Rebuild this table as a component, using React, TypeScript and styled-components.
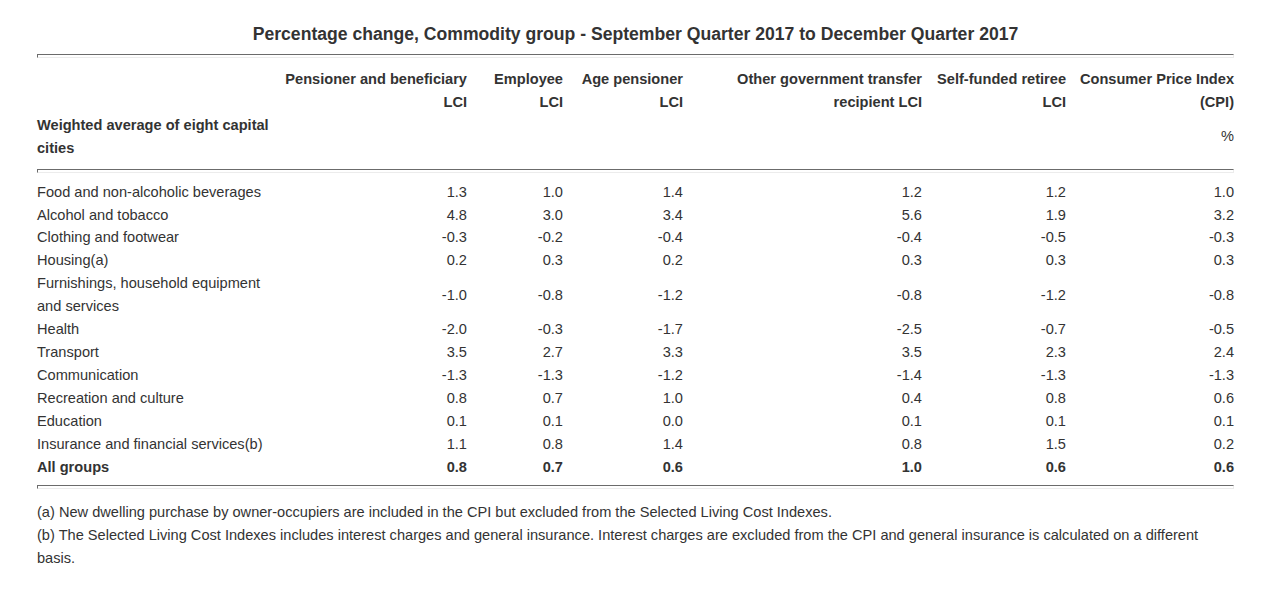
import React from "react";
import styled, { createGlobalStyle } from "styled-components";

const GlobalStyle = createGlobalStyle`
  body {
    margin: 0;
    background: #ffffff;
    font-family: "Liberation Sans", Arial, sans-serif;
    color: #333333;
  }
`;

const Page = styled.div`
  width: 1197px;
  padding: 22px 0 0 37px;
`;

const Title = styled.h2`
  margin: 0 0 8px;
  font-size: 17.6px;
  line-height: 24px;
  font-weight: bold;
  text-align: center;
`;

const Rule = styled.hr`
  margin: 0;
  height: 2px;
  border-width: 1px;
  border-style: solid;
  border-color: #6b6b6b #ececec #ececec #6b6b6b;
`;

const Table = styled.table`
  width: 1197px;
  border-collapse: collapse;
  table-layout: fixed;
  font-size: 14.6px;
  line-height: 22.9px;
`;

const RuleCell = styled.td<{ $top: number; $bottom: number }>`
  padding: ${(p) => p.$top}px 0 ${(p) => p.$bottom}px;
`;

const HeadCell = styled.th<{ $first?: boolean }>`
  padding: 0 ${(p) => (p.$first ? "4px" : "0")} 0 ${(p) => (p.$first ? "0" : "2px")};
  text-align: ${(p) => (p.$first ? "left" : "right")};
  vertical-align: ${(p) => (p.$first ? "top" : "middle")};
  font-weight: bold;
`;

const UnitCell = styled.td`
  padding: 0 0 0 2px;
  text-align: right;
  vertical-align: middle;
`;

const LabelCell = styled.td<{ $bold?: boolean }>`
  padding: 0 4px 0 0;
  text-align: left;
  font-weight: ${(p) => (p.$bold ? "bold" : "normal")};
`;

const ValueCell = styled.td<{ $bold?: boolean }>`
  padding: 0 0 0 2px;
  text-align: right;
  vertical-align: middle;
  font-weight: ${(p) => (p.$bold ? "bold" : "normal")};
`;

const Notes = styled.div`
  padding-top: 12px;
  font-size: 14.6px;
  line-height: 23px;
`;

const Note = styled.p`
  margin: 0;
`;

const widths = [241, 189, 96, 120, 239, 144, 168];

const headers = [
  "Pensioner and beneficiary LCI",
  "Employee LCI",
  "Age pensioner LCI",
  "Other government transfer recipient LCI",
  "Self-funded retiree LCI",
  "Consumer Price Index (CPI)",
];

const rows: { label: string; values: string[]; total?: boolean }[] = [
  { label: "Food and non-alcoholic beverages", values: ["1.3", "1.0", "1.4", "1.2", "1.2", "1.0"] },
  { label: "Alcohol and tobacco", values: ["4.8", "3.0", "3.4", "5.6", "1.9", "3.2"] },
  { label: "Clothing and footwear", values: ["-0.3", "-0.2", "-0.4", "-0.4", "-0.5", "-0.3"] },
  { label: "Housing(a)", values: ["0.2", "0.3", "0.2", "0.3", "0.3", "0.3"] },
  {
    label: "Furnishings, household equipment and services",
    values: ["-1.0", "-0.8", "-1.2", "-0.8", "-1.2", "-0.8"],
  },
  { label: "Health", values: ["-2.0", "-0.3", "-1.7", "-2.5", "-0.7", "-0.5"] },
  { label: "Transport", values: ["3.5", "2.7", "3.3", "3.5", "2.3", "2.4"] },
  { label: "Communication", values: ["-1.3", "-1.3", "-1.2", "-1.4", "-1.3", "-1.3"] },
  { label: "Recreation and culture", values: ["0.8", "0.7", "1.0", "0.4", "0.8", "0.6"] },
  { label: "Education", values: ["0.1", "0.1", "0.0", "0.1", "0.1", "0.1"] },
  { label: "Insurance and financial services(b)", values: ["1.1", "0.8", "1.4", "0.8", "1.5", "0.2"] },
  { label: "All groups", values: ["0.8", "0.7", "0.6", "1.0", "0.6", "0.6"], total: true },
];

function App() {
  return (
    <Page>
      <GlobalStyle />
      <Title>
        Percentage change, Commodity group - September Quarter 2017 to December Quarter 2017
      </Title>
      <Table>
        <colgroup>
          {widths.map((w, i) => (
            <col key={i} style={{ width: w }} />
          ))}
        </colgroup>
        <thead>
          <tr>
            <RuleCell colSpan={7} $top={0} $bottom={10}>
              <Rule />
            </RuleCell>
          </tr>
          <tr>
            <HeadCell $first />
            {headers.map((h) => (
              <HeadCell key={h}>{h}</HeadCell>
            ))}
          </tr>
          <tr>
            <HeadCell $first>Weighted average of eight capital cities</HeadCell>
            <UnitCell />
            <UnitCell />
            <UnitCell />
            <UnitCell />
            <UnitCell />
            <UnitCell>%</UnitCell>
          </tr>
          <tr>
            <RuleCell colSpan={7} $top={9} $bottom={8}>
              <Rule />
            </RuleCell>
          </tr>
        </thead>
        <tbody>
          {rows.map((r) => (
            <tr key={r.label}>
              <LabelCell $bold={r.total}>{r.label}</LabelCell>
              {r.values.map((v, i) => (
                <ValueCell key={i} $bold={r.total}>
                  {v}
                </ValueCell>
              ))}
            </tr>
          ))}
          <tr>
            <RuleCell colSpan={7} $top={7} $bottom={0}>
              <Rule />
            </RuleCell>
          </tr>
        </tbody>
      </Table>
      <Notes>
        <Note>
          (a) New dwelling purchase by owner-occupiers are included in the CPI but excluded from the Selected
          Living Cost Indexes.
        </Note>
        <Note>
          (b) The Selected Living Cost Indexes includes interest charges and general insurance. Interest
          charges are excluded from the CPI and general insurance is calculated on a different basis.
        </Note>
      </Notes>
    </Page>
  );
}

export default App;
